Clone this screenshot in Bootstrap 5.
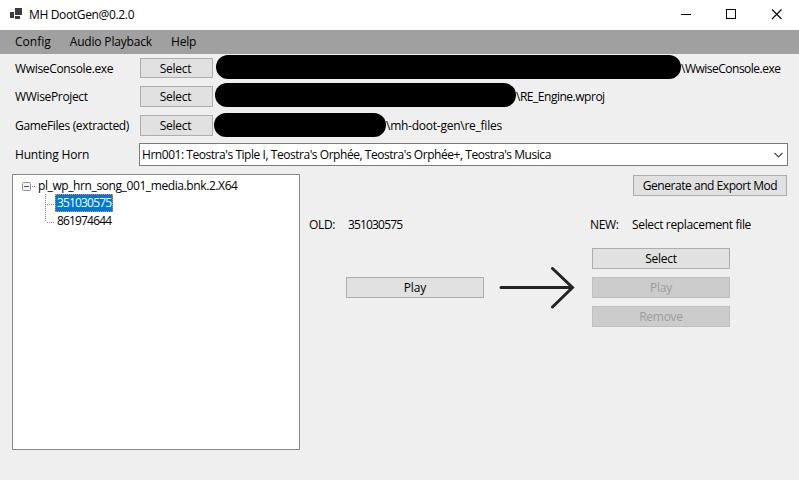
<!DOCTYPE html>
<html lang="en">
<head>
<meta charset="utf-8">
<title>MH DootGen</title>
<link rel="stylesheet" href="https://cdn.jsdelivr.net/npm/bootstrap@5.3.0/dist/css/bootstrap.min.css">
<style>
body{font-family:"Open Sans","Noto Sans",sans-serif;font-size:12px;line-height:16px;color:#000;background:#efefef;height:480px;width:799px;overflow:hidden;white-space:nowrap;letter-spacing:-.34px}
.titlebar{height:30px;background:#fff;padding-left:9px}
.app-name{margin-left:6px}
.win-btn{width:45px;height:30px}
.menubar{height:24px;background:#a0a0a0;letter-spacing:-.17px;padding-left:15px;gap:19px}
.menubar .nav-link{color:#000;padding:0}
.menubar .nav-link:first-child{letter-spacing:0}
.form-line{height:29px;padding-left:15px}
.line-first{height:28px}
.line-first .form-name,.line-first .t-a{padding-top:2px}
.form-name{width:125px}
.wbtn{--bs-btn-font-size:12px;--bs-btn-line-height:16px;--bs-btn-padding-x:0;--bs-btn-padding-y:0;--bs-btn-border-radius:0;--bs-btn-color:#000;--bs-btn-bg:#e1e1e1;--bs-btn-border-color:#adadad;--bs-btn-hover-bg:#e5f1fb;--bs-btn-hover-border-color:#0078d7;--bs-btn-disabled-bg:#ccc;--bs-btn-disabled-border-color:#bfbfbf;--bs-btn-disabled-color:#9c9c9c;--bs-btn-disabled-opacity:1;height:21px;letter-spacing:-.27px}
.wbtn-pick{width:73px;padding-right:2px}
.line-first .wbtn{height:20px;padding-top:1px}
.wbtn-wide{width:138px}
.wbtn-gen{width:154px;letter-spacing:-.46px}
.redact{height:24px;border-radius:12px;background:#000;margin-top:1px}
.redact-a{width:465px;margin-left:3px}
.redact-b{width:301px;margin-left:2px}
.redact-c{width:172px;margin-left:1px;margin-top:2px}
.combo{width:649px;height:23px;margin-left:-1px;margin-top:-1px;background:#fff;border:1px solid #7a7a7a;letter-spacing:-.455px;padding:1px 4px 0 2px}
.tree{width:288px;height:276px;border:1px solid #828790;background:#fff;margin:5px 0 0 12px;padding:2px 0 0 9px}
.tree-root{height:17px;letter-spacing:-.4px}
.leaf{height:17px;line-height:17px;letter-spacing:-.84px;padding:0 2px}
.leaf.active{height:18px;line-height:15px;background:#0078d7;color:#fff;border:1px dotted #ff8728;padding:0 1px;width:58px}
.tight{letter-spacing:-.84px}
.t-a{letter-spacing:-.5px}.t-b{letter-spacing:-.48px}.t-c{letter-spacing:-.25px}.t-d{letter-spacing:-.17px}
.side{padding:6px 12px 0 9px}
.old-col{width:175px;margin-top:21px}
.arrow{width:76px;height:42px;margin:71px 0 0 15px}
.new-col{padding-left:15px;margin-top:21px}
.caption{height:16px}
.old-key{width:39px}
.new-key{width:42px}
.play-old{margin:44px 0 0 37px;letter-spacing:-.1px}
.new-actions{margin:15px 0 0 2px;gap:8px}
</style>
<script src="https://cdn.jsdelivr.net/npm/bootstrap@5.3.0/dist/js/bootstrap.bundle.min.js"></script>
</head>
<body class="d-flex flex-column">
<header class="titlebar d-flex align-items-center">
  <svg width="14" height="14" viewBox="0 0 14 14" shape-rendering="crispEdges" fill="#3c3c3c"><path d="M6 0h7v7H6zM1 4h4v6H1zM6 8h5v3H6z"/></svg>
  <span class="app-name">MH DootGen@0.2.0</span>
  <div class="d-flex ms-auto">
    <svg class="win-btn" viewBox="0 0 45 30" shape-rendering="crispEdges"><path d="M17 14.500h10" stroke="#000"/></svg>
    <svg class="win-btn" viewBox="0 0 45 30" shape-rendering="crispEdges"><path d="M17.500 9.500h9v9h-9z" fill="none" stroke="#000"/></svg>
    <svg class="win-btn" viewBox="0 0 45 30"><path d="M18 9.500l9.500 9.500M27.500 9.500L18 19" stroke="#000" stroke-width="1.100"/></svg>
  </div>
</header>
<nav class="menubar d-flex align-items-center">
  <a class="nav-link" href="#">Config</a>
  <a class="nav-link" href="#">Audio Playback</a>
  <a class="nav-link" href="#">Help</a>
</nav>
<div class="form-line line-first d-flex align-items-center">
  <div class="form-name">WwiseConsole.exe</div>
  <button class="btn wbtn wbtn-pick">Select</button>
  <div class="redact redact-a align-self-start"></div><span class="t-a">\WwiseConsole.exe</span>
</div>
<div class="form-line d-flex align-items-center">
  <div class="form-name">WWiseProject</div>
  <button class="btn wbtn wbtn-pick">Select</button>
  <div class="redact redact-b align-self-start"></div><span class="t-b">\RE_Engine.wproj</span>
</div>
<div class="form-line d-flex align-items-center">
  <div class="form-name">GameFiles (extracted)</div>
  <button class="btn wbtn wbtn-pick">Select</button>
  <div class="redact redact-c align-self-start"></div><span class="t-c">\mh-doot-gen\re_files</span>
</div>
<div class="form-line d-flex align-items-center">
  <div class="form-name t-d">Hunting Horn</div>
  <div class="combo d-flex align-items-center justify-content-between"><span>Hrn001: Teostra's Tiple I, Teostra's Orphée, Teostra's Orphée+, Teostra's Musica</span>
    <svg width="9" height="6" viewBox="0 0 9 6"><path d="M.500 1l4 4 4-4" fill="none" stroke="#444" stroke-width="1.100"/></svg></div>
</div>
<main class="d-flex align-items-start">
  <div class="tree">
    <div class="tree-root d-flex align-items-center">
      <svg width="16" height="17" viewBox="0 0 16 17"><rect x=".500" y="5.500" width="8" height="8" rx="1" fill="#f4f4f4" stroke="#919191"/><path d="M2 9.500h5" stroke="#3c50a0"/><path d="M10 9.500h3" stroke="#808080" stroke-dasharray="1 1"/></svg>
      <span>pl_wp_hrn_song_001_media.bnk.2.X64</span>
    </div>
    <div class="d-flex">
      <svg width="33" height="35" viewBox="0 0 33 35"><path d="M23.500 0v28M25 10.500h7M25 28.500h7" fill="none" stroke="#808080" stroke-dasharray="1 1"/></svg>
      <div><div class="leaf active">351030575</div><div class="leaf">861974644</div></div>
    </div>
  </div>
  <section class="side flex-grow-1">
    <div class="d-flex justify-content-end"><button class="btn wbtn wbtn-gen">Generate and Export Mod</button></div>
    <div class="d-flex align-items-start">
      <div class="old-col">
        <div class="caption d-flex"><span class="old-key">OLD:</span><span class="tight">351030575</span></div>
        <button class="btn wbtn wbtn-wide play-old">Play</button>
      </div>
      <svg class="arrow" viewBox="0 0 76 42"><path d="M2 20.500H73.500M53.500 1.500L73.500 20.500 53.500 40" fill="none" stroke="#222426" stroke-width="3" stroke-linecap="round"/></svg>
      <div class="new-col">
        <div class="caption d-flex"><span class="new-key">NEW:</span><span>Select replacement file</span></div>
        <div class="new-actions d-flex flex-column">
          <button class="btn wbtn wbtn-wide">Select</button>
          <button class="btn wbtn wbtn-wide" disabled>Play</button>
          <button class="btn wbtn wbtn-wide" disabled>Remove</button>
        </div>
      </div>
    </div>
  </section>
</main>
</body>
</html>
